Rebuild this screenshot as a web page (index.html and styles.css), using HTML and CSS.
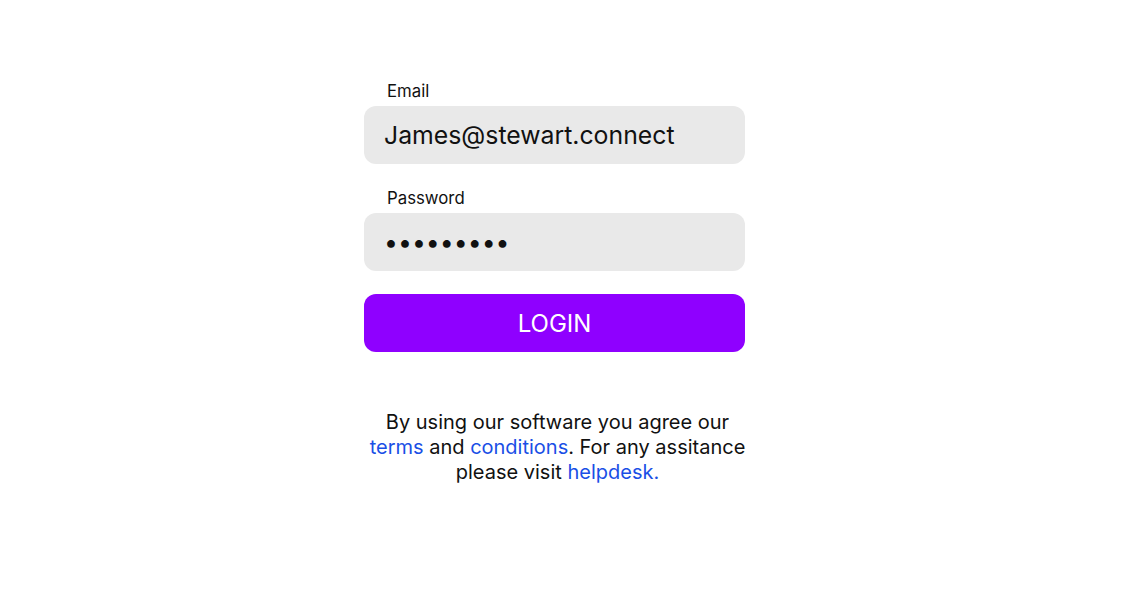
FILE: index.html
```html
<!DOCTYPE html>
<html>
<head>
<meta charset="utf-8">
<link rel="stylesheet" href="styles.css">
</head>
<body>
<main class="login">
  <form class="form">
    <label class="field">
      <span class="label">Email</span>
      <span class="input">James@stewart.connect</span>
    </label>
    <label class="field field-last">
      <span class="label">Password</span>
      <span class="input password">•••••••••</span>
    </label>
    <button type="button" class="btn">LOGIN</button>
  </form>
  <p class="terms">By using our software you agree our <a href="#">terms</a> and <a href="#">conditions</a>. For any assitance please visit <a href="#">helpdesk.</a></p>
</main>
</body>
</html>
```
FILE: styles.css
```css
html, body {
  margin: 0;
  padding: 0;
  background: #fff;
}
body {
  font-family: Inter, "Noto Sans", sans-serif;
  color: #111;
}
.login {
  width: 381px;
  margin-left: 364px;
  padding-top: 81px;
  display: flex;
  flex-direction: column;
}
.form {
  display: flex;
  flex-direction: column;
}
.field {
  display: flex;
  flex-direction: column;
  margin-bottom: 24px;
}
.field-last {
  margin-bottom: 23px;
}
.label {
  font-size: 16.8px;
  line-height: 20px;
  padding-left: 23px;
  margin-bottom: 5px;
}
.input {
  height: 58px;
  background: #e9e9e9;
  border-radius: 12px;
  display: flex;
  align-items: center;
  padding-left: 20px;
  font-size: 24.8px;
}
.password {
  padding-left: 20px;
  letter-spacing: 0;
}
.btn {
  height: 58px;
  border: none;
  border-radius: 12px;
  background: #8f00ff;
  color: #fff;
  font-family: inherit;
  font-size: 24px;
  padding: 0;
  margin-top: 0;
}
.terms {
  width: 387px;
  margin: 58px 0 0 0;
  text-align: center;
  font-size: 20px;
  line-height: 25px;
}
.terms a {
  color: #1a4fe6;
  text-decoration: none;
}
```
